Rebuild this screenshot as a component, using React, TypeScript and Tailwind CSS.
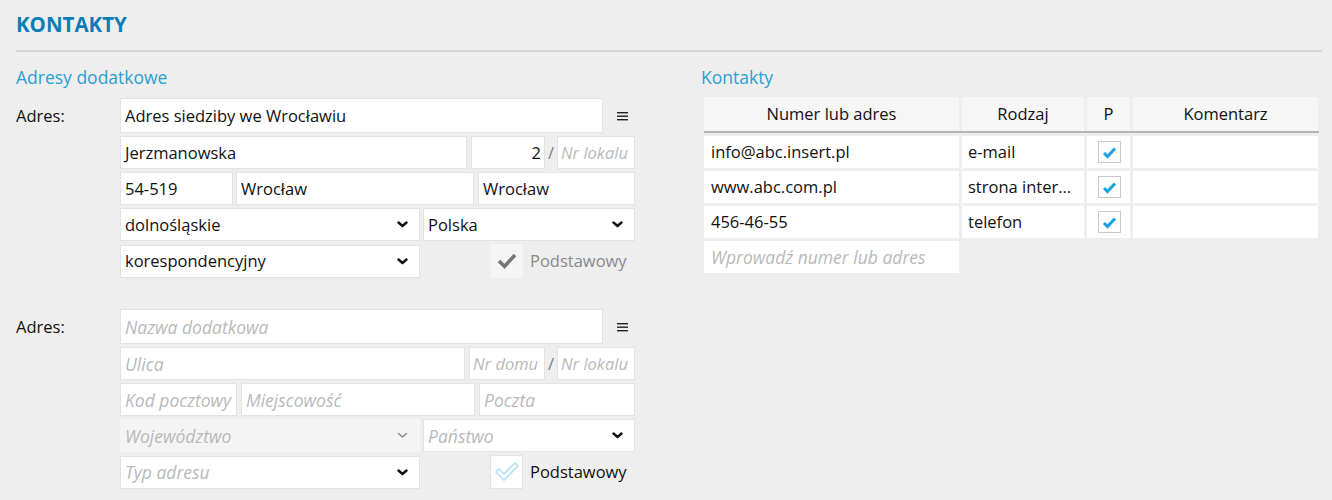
import React from 'react'

const font = { fontFamily: '"Open Sans", "Noto Sans", Arial, sans-serif' }

function Chevron({ muted }: { muted?: boolean }) {
  return (
    <svg width="11" height="7" viewBox="0 0 11 7" className="shrink-0">
      <polyline
        points="1.5,1.5 5.5,5 9.5,1.5"
        fill="none"
        stroke={muted ? '#8a8a8a' : '#111'}
        strokeWidth={muted ? 1.6 : 2.4}
        strokeLinecap="round"
        strokeLinejoin="round"
      />
    </svg>
  )
}

function Menu() {
  return (
    <svg width="11" height="10" viewBox="0 0 11 10">
      <rect x="0" y="1" width="11" height="1.4" fill="#222" />
      <rect x="0" y="4.5" width="11" height="1.4" fill="#222" />
      <rect x="0" y="8" width="11" height="1.4" fill="#222" />
    </svg>
  )
}

interface FieldProps {
  w: string
  h?: string
  value?: string
  placeholder?: string
  right?: boolean
  narrow?: boolean
  className?: string
}

function Placeholder({ text, narrow }: { text?: string; narrow?: boolean }) {
  return (
    <span className={`italic text-[#b9b9b9] ${narrow ? 'text-[16.5px]' : 'text-[17.5px]'}`}>{text}</span>
  )
}

function Field({ w, h = 'h-[33px]', value, placeholder, right, narrow, className = '' }: FieldProps) {
  return (
    <div
      className={`${w} ${h} ${className} ${narrow ? 'px-[3px]' : 'px-[4px]'} shrink-0 bg-white border border-[#e3e3e3] flex items-center overflow-hidden whitespace-nowrap ${right ? 'justify-end' : ''}`}
    >
      {value ? <span className="text-[#111]">{value}</span> : <Placeholder text={placeholder} narrow={narrow} />}
    </div>
  )
}

function Select({ w, value, placeholder, disabled }: { w: string; value?: string; placeholder?: string; disabled?: boolean }) {
  return (
    <div
      className={`${w} h-[33px] shrink-0 flex items-center justify-between pl-[4px] pr-[11px] ${disabled ? 'bg-[#f4f4f4] border border-[#f4f4f4]' : 'bg-white border border-[#e3e3e3]'}`}
    >
      {value ? <span className="text-[#111]">{value}</span> : <Placeholder text={placeholder} />}
      <Chevron muted={disabled} />
    </div>
  )
}

function CheckDisabled() {
  return (
    <div className="w-[33px] h-[34px] bg-[#f5f5f5] flex items-center justify-center">
      <svg width="22" height="18" viewBox="0 0 22 18">
        <polyline points="3,9 8.5,14.5 19,3" fill="none" stroke="#767676" strokeWidth="3.6" strokeLinejoin="miter" />
      </svg>
    </div>
  )
}

function CheckOutline() {
  return (
    <div className="w-[33px] h-[34px] bg-white border border-[#e3e3e3] flex items-center justify-center">
      <svg width="26" height="22" viewBox="0 0 26 22">
        <polygon
          points="2,11 5,8 10,13 21,2 24,5 10,19"
          fill="#fff"
          stroke="#b4e0f3"
          strokeWidth="1.6"
          strokeLinejoin="miter"
        />
      </svg>
    </div>
  )
}

function TableCheck() {
  return (
    <div className="w-[23px] h-[22px] bg-white border border-[#c9c9c9] flex items-center justify-center">
      <svg width="15" height="13" viewBox="0 0 15 13">
        <polyline points="2,7 5.5,10.5 13,2.5" fill="none" stroke="#1ba1e2" strokeWidth="3" />
      </svg>
    </div>
  )
}

function AddressBlock({ filled }: { filled: boolean }) {
  return (
    <div className="flex">
      <div className="w-[104px] shrink-0 h-[35px] flex items-center text-[#111]">Adres:</div>
      <div className="flex flex-col gap-[3px] w-[515px]">
        {/* nazwa */}
        <div className="flex items-center">
          <Field
            w="w-[483px]"
            h="h-[35px]"
            value={filled ? 'Adres siedziby we Wrocławiu' : undefined}
            placeholder="Nazwa dodatkowa"
          />
          <div className="flex-1 flex justify-center pl-[6px]">
            <Menu />
          </div>
        </div>
        {/* ulica */}
        <div className="flex items-center">
          <Field w={filled ? 'w-[347px]' : 'w-[345px]'} value={filled ? 'Jerzmanowska' : undefined} placeholder="Ulica" />
          <Field
            w={filled ? 'w-[74px]' : 'w-[76px]'}
            className="ml-[4px]"
            value={filled ? '2' : undefined}
            placeholder="Nr domu"
            right={filled}
            narrow
          />
          <div className="w-[12px] flex justify-center text-[#7c7c7c]">/</div>
          <Field w="w-[78px]" placeholder="Nr lokalu" narrow />
        </div>
        {/* kod, miejscowość, poczta */}
        <div className="flex items-center">
          <Field w={filled ? 'w-[113px]' : 'w-[117px]'} value={filled ? '54-519' : undefined} placeholder="Kod pocztowy" />
          <Field
            w={filled ? 'w-[238px]' : 'w-[234px]'}
            className={filled ? 'ml-[3px]' : 'ml-[4px]'}
            value={filled ? 'Wrocław' : undefined}
            placeholder="Miejscowość"
          />
          <Field
            w={filled ? 'w-[157px]' : 'w-[156px]'}
            className="ml-[4px]"
            value={filled ? 'Wrocław' : undefined}
            placeholder="Poczta"
          />
        </div>
        {/* województwo, państwo */}
        <div className="flex items-center gap-[3px]">
          <Select w="w-[300px]" value={filled ? 'dolnośląskie' : undefined} placeholder="Województwo" disabled={!filled} />
          <Select w="w-[212px]" value={filled ? 'Polska' : undefined} placeholder="Państwo" />
        </div>
        {/* typ */}
        <div className="flex items-center">
          <Select w="w-[300px]" value={filled ? 'korespondencyjny' : undefined} placeholder="Typ adresu" />
          <div className="ml-[70px] flex items-center gap-[7px]">
            {filled ? <CheckDisabled /> : <CheckOutline />}
            <span className={filled ? 'text-[#8a8a8a]' : 'text-[#111]'}>Podstawowy</span>
          </div>
        </div>
      </div>
    </div>
  )
}

const contacts = [
  { value: 'info@abc.insert.pl', kind: 'e-mail' },
  { value: 'www.abc.com.pl', kind: 'strona inter...' },
  { value: '456-46-55', kind: 'telefon' },
]

export default function App() {
  return (
    <div className="min-h-[500px] bg-[#eeeeee] text-[16.5px] leading-[22px] text-[#111]" style={font}>
      <div className="px-[16px] pt-[11px]">
        <h1 className="text-[20.5px] leading-[26px] font-bold text-[#0a7db7]">KONTAKTY</h1>
        <div className="mt-[13px] h-[2px] bg-[#d6d6d6] mr-[-6px]" />

        <div className="flex mt-[14px]">
          {/* Adresy */}
          <div className="w-[685px] shrink-0">
            <h2 className="text-[17.5px] leading-[22px] text-[#2b9fd1]">Adresy dodatkowe</h2>
            <div className="mt-[10px]">
              <AddressBlock filled />
            </div>
            <div className="mt-[31px]">
              <AddressBlock filled={false} />
            </div>
          </div>

          {/* Kontakty */}
          <div className="flex-1">
            <h2 className="text-[17.5px] leading-[22px] text-[#2b9fd1]">Kontakty</h2>
            <div className="mt-[9px] ml-[3px] w-[615px]">
              <div className="flex gap-[3px] border-b-2 border-[#b3b3b3] bg-[#eeeeee]">
                <div className="w-[255px] h-[34px] bg-[#f6f6f6] flex items-center justify-center">Numer lub adres</div>
                <div className="w-[122px] h-[34px] bg-[#f6f6f6] flex items-center justify-center">Rodzaj</div>
                <div className="w-[43px] h-[34px] bg-[#f6f6f6] flex items-center justify-center">P</div>
                <div className="w-[185px] h-[34px] bg-[#f6f6f6] flex items-center justify-center">Komentarz</div>
              </div>
              <div className="flex flex-col gap-[3px] mt-[3px]">
                {contacts.map((c) => (
                  <div key={c.value} className="flex gap-[3px]">
                    <div className="w-[255px] h-[32px] bg-white flex items-center pl-[7px]">{c.value}</div>
                    <div className="w-[122px] h-[32px] bg-white flex items-center pl-[6px] whitespace-nowrap">{c.kind}</div>
                    <div className="w-[43px] h-[32px] bg-white flex items-center pl-[11px]">
                      <TableCheck />
                    </div>
                    <div className="w-[185px] h-[32px] bg-white" />
                  </div>
                ))}
                <div className="w-[255px] h-[32px] bg-white flex items-center pl-[7px]">
                  <Placeholder text="Wprowadź numer lub adres" />
                </div>
              </div>
            </div>
          </div>
        </div>
      </div>
    </div>
  )
}
